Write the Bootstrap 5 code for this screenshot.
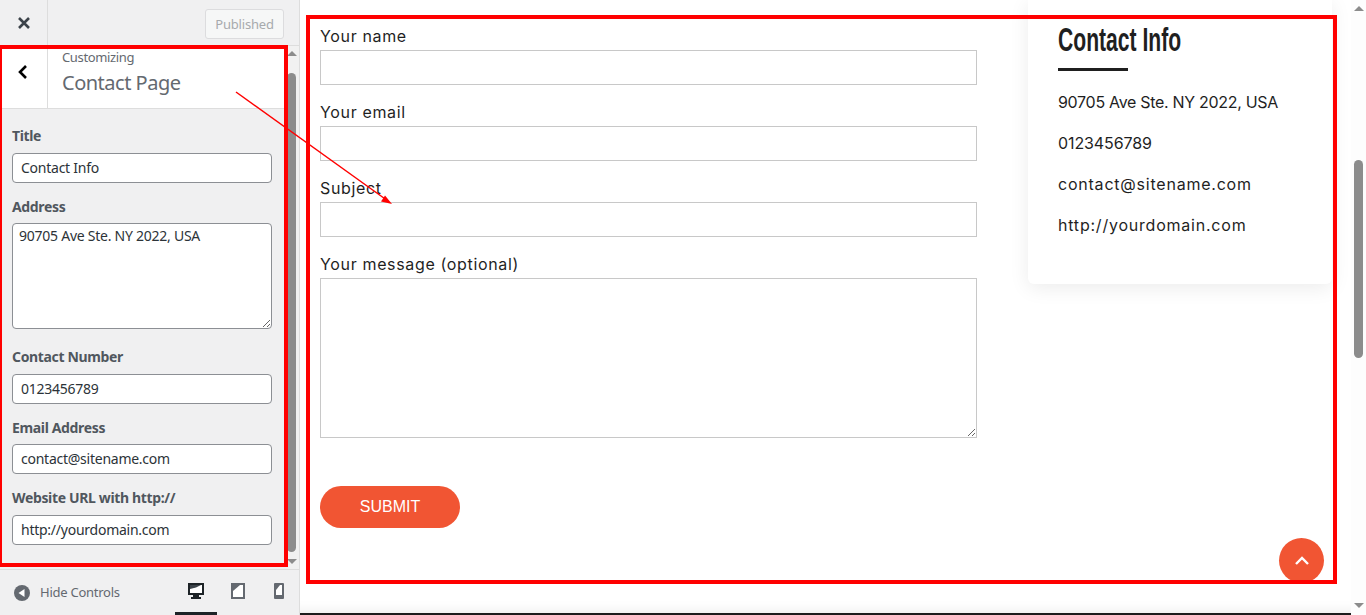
<!DOCTYPE html>
<html lang="en">
  <head>
    <meta charset="UTF-8" />
    <meta name="viewport" content="width=device-width, initial-scale=1.0" />
    <title>Customize: Contact Page</title>
    <link
      href="https://cdn.jsdelivr.net/npm/bootstrap@5.3.0/dist/css/bootstrap.min.css"
      rel="stylesheet"
    />
    <style>
      html, body { height: 615px; overflow: hidden; }
      body { position: relative; background: #fff; }
      .shell { height: 615px; }

      /* customizer sidebar */
      .side { width: 300px; flex: none; background: #f0f0f1; border-right: 1px solid #ddd; font-family: "Noto Sans", sans-serif; color: #50575e; }
      .side-top { height: 46px; border-bottom: 1px solid #ddd; }
      .close-box { width: 48px; border-right: 1px solid #ddd; }
      .pub-btn { --bs-btn-disabled-color: #a7aaad; --bs-btn-disabled-bg: #f6f7f7; --bs-btn-disabled-border-color: #dcdcde; --bs-btn-disabled-opacity: 1; width: 79px; height: 30px; margin: 9px 15px 0 0; padding: 0; font-size: 13px; letter-spacing: -.2px; line-height: 28px; border-radius: 3px; }
      .side-mid { height: 524px; border-bottom: 1px solid #ddd; }
      .panel-col { width: 287px; flex: none; }
      .panel-head { height: 63px; background: #fff; border-bottom: 1px solid #ddd; }
      .back-box { width: 48px; padding: 0 1px 11px 0; border-right: 1px solid #ddd; }
      .head-text { padding-left: 14px; color: #646970; }
      .head-small { font-size: 13px; letter-spacing: -.35px; line-height: 20px; margin-top: 1px; }
      .head-big { font-size: 20px; letter-spacing: -.5px; line-height: 28px; margin-top: 2px; }
      .panel-form { padding: 17px 15px 0 12px; }
      .field-label { display: block; margin: 0 0 7px; font-size: 14px; font-weight: 700; letter-spacing: -.35px; line-height: 20px; }
      .label-tight { margin-bottom: 6px; }
      .field-input { display: block; width: 100%; height: 30px; padding: 0 8px 2px; font-size: 14px; letter-spacing: -.25px; color: #2c3338; border: 1px solid #8c8f94; border-radius: 4px; box-shadow: none; }
      .field-area { height: 106px; padding: 2px 6px; line-height: 20px; resize: vertical; }
      .field-gap { margin-bottom: 14px; }
      .area-gap { margin-bottom: 18px; }
      .side-bar { width: 12px; flex: none; background: #f1f1f1; padding-top: 27px; }
      .side-thumb { width: 9px; height: 479px; background: #8c8c8c; border-radius: 5px; }
      .side-foot { height: 45px; font-size: 13px; }
      .hide-start { padding-left: 14px; }
      .hide-txt { color: #646970; margin-left: 10px; letter-spacing: -.25px; }
      .dev-btn { width: 41px; height: 45px; border-bottom: 3px solid transparent; }
      .dev-active { width: 42px; border-bottom-color: #1d2327; }

      /* site preview */
      .preview { min-width: 0; font-family: Inter, sans-serif; color: #1f1f1f; border-bottom: 2px solid #1d1d1d; box-shadow: inset 0 -14px 14px -14px #e8e8e8; }
      .form-col { width: 657px; margin-left: 20px; flex: none; padding-top: 25px; }
      .cf-label { display: block; margin: 0 0 3px; font-size: 16px; letter-spacing: .65px; line-height: 22px; }
      .cf-input { display: block; width: 100%; height: 35px; padding: 0 10px; border: 1px solid #c8c8c8; border-radius: 0; margin-bottom: 16px; }
      .cf-area { height: 160px; margin-bottom: 48px; resize: vertical; }
      .submit-btn { width: 140px; height: 42px; padding: 0; font-family: "Liberation Sans", Arial, sans-serif; font-size: 16px; color: #fff; background: #f15533; border: 0; border-radius: 21px; }
      .info-box { width: 304px; height: 284px; margin-left: 51px; flex: none; padding: 0 30px; background: #fff; border-radius: 0 0 6px 6px; box-shadow: 0 4px 20px rgba(0, 0, 0, .08); }
      .info-title { margin: 0; padding-top: 21px; font-family: "Liberation Sans", sans-serif; font-size: 33px; line-height: 37px; font-weight: 700; color: #1f1f1f; white-space: nowrap; transform: scaleX(.64); transform-origin: left center; }
      .info-rule { width: 70px; height: 3px; margin: 10px 0 20px; background: #1f1f1f; }
      .info-line { margin: 0 0 19px; font-size: 16px; line-height: 22px; }
      .line-addr { letter-spacing: -.3px; }
      .line-num { letter-spacing: -.1px; }
      .line-wide { letter-spacing: .78px; }

      /* page scrollbar */
      .page-bar { width: 15px; flex: none; background: #fdfdfd; padding-top: 160px; }
      .page-thumb { width: 9px; height: 198px; margin-left: 3px; background: #8c8c8c; border-radius: 5px; }

      /* things sitting over the page */
      .to-top { position: absolute; left: 1279px; top: 538px; width: 45px; height: 45px; background: #f15533; border-radius: 50%; }
      .mark-box { position: absolute; border: 4px solid #f00; pointer-events: none; }
      .mark-left { left: -2px; top: 45px; width: 290px; height: 522px; }
      .mark-right { left: 306px; top: 15px; width: 1031px; height: 569px; }
      .mark-arrow { position: absolute; left: 0; top: 0; pointer-events: none; }
      .tri { position: absolute; width: 0; height: 0; border-left: 5px solid transparent; border-right: 5px solid transparent; }
      .tri-up { border-bottom: 5px solid #8c8c8c; }
      .tri-down { border-top: 5px solid #8c8c8c; }
      .t1 { left: 287px; top: 51px; }
      .t2 { left: 287px; top: 559px; }
      .t3 { left: 1354px; top: 6px; }
      .t4 { left: 1354px; top: 603px; }
    </style>
  </head>
  <body>
    <div class="shell d-flex">
      <aside class="side d-flex flex-column">
        <div class="side-top d-flex justify-content-between">
          <div class="close-box d-flex align-items-center justify-content-center">
            <svg width="14" height="14" viewBox="0 0 14 14"><path d="M2 2l10 10M12 2L2 12" stroke="#3c434a" stroke-width="2.6" fill="none" /></svg>
          </div>
          <button class="btn pub-btn" disabled>Published</button>
        </div>
        <div class="side-mid d-flex">
          <div class="panel-col">
            <div class="panel-head d-flex">
              <div class="back-box d-flex align-items-center justify-content-center">
                <svg width="12" height="16" viewBox="0 0 12 16"><path d="M9 2L3 8l6 6" stroke="#000" stroke-width="2.6" fill="none" /></svg>
              </div>
              <div class="head-text">
                <div class="head-small">Customizing</div>
                <div class="head-big">Contact Page</div>
              </div>
            </div>
            <form class="panel-form">
              <label class="field-label">Title</label>
              <input class="form-control field-input field-gap" value="Contact Info" />
              <label class="field-label label-tight">Address</label>
              <textarea class="form-control field-input field-area area-gap">90705 Ave Ste. NY 2022, USA</textarea>
              <label class="field-label">Contact Number</label>
              <input class="form-control field-input field-gap" value="0123456789" />
              <label class="field-label label-tight">Email Address</label>
              <input class="form-control field-input field-gap" value="contact@sitename.com" />
              <label class="field-label">Website URL with http://</label>
              <input class="form-control field-input" value="http://yourdomain.com" />
            </form>
          </div>
          <div class="side-bar"><div class="side-thumb"></div></div>
        </div>
        <div class="side-foot d-flex align-items-center">
          <div class="hide-start d-flex align-items-center flex-grow-1">
            <svg width="16" height="16" viewBox="0 0 16 16"><circle cx="8" cy="8" r="8" fill="#646970" /><path d="M10.5 4v8L4.5 8z" fill="#fff" /></svg>
            <span class="hide-txt">Hide Controls</span>
          </div>
          <div class="d-flex">
            <div class="dev-btn dev-active d-flex align-items-center justify-content-center">
              <svg width="16" height="16" viewBox="0 0 16 16"><path d="M0 0h16v12h-5v2h2v2H3v-2h2v-2H0z" fill="#1d2327" /><path d="M2 2h12v8H2z" fill="#fff" /><path d="M2 2h11L8 4.500 2 6z" fill="#3c434a" /></svg>
            </div>
            <div class="dev-btn d-flex align-items-center justify-content-center">
              <svg width="14" height="16" viewBox="0 0 14 16"><rect x="1" y="1" width="12" height="14" fill="#fff" stroke="#646970" stroke-width="2" /><path d="M2 2h7L2 8z" fill="#646970" /></svg>
            </div>
            <div class="dev-btn d-flex align-items-center justify-content-center">
              <svg width="10" height="16" viewBox="0 0 10 16"><rect width="10" height="16" rx="1" fill="#646970" /><path d="M2 2h6v10H2z" fill="#fff" /><path d="M2 2h4L2 7z" fill="#646970" /></svg>
            </div>
          </div>
        </div>
      </aside>

      <main class="preview flex-grow-1 d-flex">
        <form class="form-col">
          <label class="cf-label">Your name</label>
          <input class="form-control cf-input" />
          <label class="cf-label">Your email</label>
          <input class="form-control cf-input" />
          <label class="cf-label">Subject</label>
          <input class="form-control cf-input" />
          <label class="cf-label">Your message (optional)</label>
          <textarea class="form-control cf-input cf-area"></textarea>
          <button type="button" class="btn submit-btn">SUBMIT</button>
        </form>
        <div class="info-box">
          <h2 class="info-title">Contact Info</h2>
          <div class="info-rule"></div>
          <p class="info-line line-addr">90705 Ave Ste. NY 2022, USA</p>
          <p class="info-line line-num">0123456789</p>
          <p class="info-line line-wide">contact@sitename.com</p>
          <p class="info-line line-wide">http://yourdomain.com</p>
        </div>
      </main>
      <div class="page-bar"><div class="page-thumb"></div></div>
    </div>

    <span class="tri tri-up t1"></span>
    <span class="tri tri-down t2"></span>
    <span class="tri tri-up t3"></span>
    <span class="tri tri-down t4"></span>

    <a class="to-top d-flex align-items-center justify-content-center" href="#">
      <svg width="16" height="10" viewBox="0 0 16 10"><path d="M2 8l6-6 6 6" stroke="#fff" stroke-width="2.4" fill="none" /></svg>
    </a>

    <div class="mark-box mark-left"></div>
    <div class="mark-box mark-right"></div>
    <svg class="mark-arrow" width="1366" height="615" viewBox="0 0 1366 615">
      <path d="M236 92L388 201" stroke="#f00" stroke-width="1.5" fill="none" />
      <path d="M392 204l-11-2.500 4-6z" fill="#f00" />
    </svg>
  </body>
</html>
